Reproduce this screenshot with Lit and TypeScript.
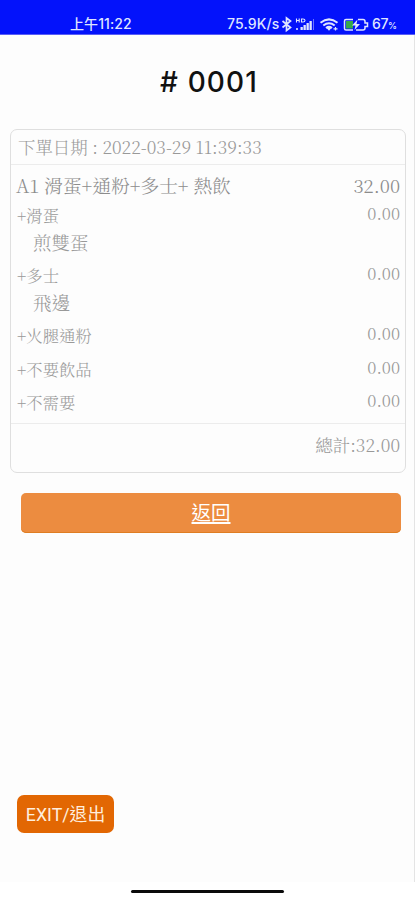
import { LitElement, html, css, svg } from "lit";
import { customElement } from "lit/decorators.js";
import { styleMap } from "lit/directives/style-map.js";

interface Option {
  name: string;
  note?: string;
  price: string;
  height: number;
}

const OPTIONS: Option[] = [
  { name: "+滑蛋", note: "煎雙蛋", price: "0.00", height: 60 },
  { name: "+多士", note: "飛邊", price: "0.00", height: 60 },
  { name: "+火腿通粉", price: "0.00", height: 34 },
  { name: "+不要飲品", price: "0.00", height: 33 },
  { name: "+不需要", price: "0.00", height: 36 },
];

@customElement("status-bar")
class StatusBar extends LitElement {
  static styles = css`
    :host {
      display: flex;
      box-sizing: border-box;
      height: 35px;
      padding: 15px 18px 0 70px;
      background: #0312fb;
      border-bottom: 1px solid #5a5ef5;
      color: #dfe5ff;
      font: 500 14px/18px Inter, "Noto Sans CJK TC", sans-serif;
      white-space: nowrap;
    }
    .time { flex: 1; font-size: 14px; letter-spacing: 0.1px; }
    .speed { width: 54px; letter-spacing: 0.15px; }
    svg { display: block; width: 91px; height: 18px; }
    .level { width: 25px; letter-spacing: -0.4px; }
    .pct { font-size: 9px; }
  `;
  render() {
    const bars = [0, 1, 2, 3].map(
      (i) => svg`<rect x=${19.5 + i * 3} y=${12 - i * 2} width="2.3" height=${3 + i * 2} fill="#dfe5ff" stroke="none" />`
    );
    return html`
      <span class="time">上午11:22</span>
      <span class="speed">75.9K/s</span>
      <svg viewBox="0 0 91 18" fill="none" stroke="#dfe5ff">
        <path d="M1.500 6 L9.500 12.500 L5.500 15.500 V3 L9.500 6 L1.500 12.500" stroke-width="1.700" />
        <path d="M15.500 3.500v4M18.200 3.500v4M15.500 5.500h2.700M20.500 4h1.500q2 0 2 1.500t-2 1.500h-1.500z" stroke-width="1.100" />
        <path d="M16 13v2" stroke-width="1.600" />
        ${bars}
        <path d="M32.500 4v11" stroke="#6a72ff" />
        <path d="M39.500 7.800q8.500-6.800 17 0M42.300 10.500q5.700-4.500 11.400 0M45 13q3-2.300 6 0" stroke-width="2" />
        <path d="M45.500 13h5l-2.500 2.800z" fill="#dfe5ff" stroke="none" />
        <path d="M52.500 13.800h4M54.500 12v3.500" stroke-width="1.200" />
        <path d="M72 4.500H65q-1.500 0-1.500 1.500v7.500q0 1.500 1.500 1.500h7M77 4.500h5q2 0 2 2v1.500h2.500v3.500h-2.500v1.500q0 2-2 2h-7" stroke-width="1.500" />
        <rect x="65" y="6" width="7" height="7.500" fill="#35a94b" stroke="none" />
        <path d="M76.500 4.500l-5.500 6h3.500l-1 4.500 5.500-6h-3.500z" fill="#dfe5ff" stroke="none" />
      </svg>
      <span class="level">67<span class="pct">%</span></span>
    `;
  }
}

@customElement("order-card")
class OrderCard extends LitElement {
  static styles = css`
    :host {
      display: block;
      box-sizing: border-box;
      height: 344px;
      margin: 0 8px 0 10px;
      border: 1.500px solid #dfdfdf;
      border-radius: 7px;
      color: #999;
      font-family: "Noto Serif CJK TC", "Liberation Serif", "Noto Sans CJK TC", serif;
      font-weight: 300;
      white-space: nowrap;
    }
    .date {
      height: 34px;
      padding-left: 7px;
      border-bottom: 1px solid #ececec;
      font-size: 17.450px;
      line-height: 34px;
    }
    .item {
      display: flex;
      justify-content: space-between;
      height: 35px;
      padding: 0 5px;
      color: #8c8c8c;
      font-size: 18.700px;
      line-height: 40px;
    }
    .option {
      display: flex;
      justify-content: space-between;
      padding: 0 5px 0 6px;
    }
    .name { font-size: 16.300px; line-height: 31px; }
    .note { padding-left: 16px; font-size: 18.500px; line-height: 22px; }
    .price { font-size: 16.800px; line-height: 26px; }
    .total {
      padding-right: 5px;
      border-top: 1px solid #ececec;
      font-size: 17.500px;
      line-height: 41px;
      text-align: right;
    }
  `;
  render() {
    return html`
      <div class="date">下單日期 : 2022-03-29 11:39:33</div>
      <div class="item"><span>A1 滑蛋+通粉+多士+ 熱飲</span><span>32.00</span></div>
      ${OPTIONS.map(
        (o) => html`
          <div class="option" style=${styleMap({ height: `${o.height}px` })}>
            <div>
              <div class="name">${o.name}</div>
              ${o.note ? html`<div class="note">${o.note}</div>` : null}
            </div>
            <span class="price">${o.price}</span>
          </div>
        `
      )}
      <div class="total">總計:32.00</div>
    `;
  }
}

@customElement("app-root")
class AppRoot extends LitElement {
  static styles = css`
    :host {
      display: flex;
      flex-direction: column;
      height: 900px;
      background: #fff;
      font-family: Inter, "Noto Sans CJK TC", sans-serif;
    }
    .page {
      box-sizing: border-box;
      display: flex;
      flex-direction: column;
      height: 847px;
      background: #fdfdfd;
      border-right: 1px solid #e4e4e4;
    }
    .title {
      margin: 0;
      height: 94px;
      padding-left: 4px;
      color: #111;
      font-size: 28px;
      font-weight: 500;
      line-height: 95px;
      letter-spacing: 1.1px;
      text-align: center;
    }
    .back {
      margin: 20px 13px 0 21px;
      height: 40px;
      border-radius: 5px;
      background: #ec8c40;
      box-shadow: inset 0 -1px #df7d22;
      color: #fff;
      font: 400 19.500px/38px "Noto Sans CJK TC", sans-serif;
      text-align: center;
      text-decoration: underline;
      text-underline-offset: 2px;
      text-decoration-thickness: 1.500px;
    }
    .exit {
      align-self: flex-start;
      margin: 262px 0 0 17px;
      width: 97px;
      height: 38px;
      border-radius: 7px;
      background: #e26703;
      color: #ffeedd;
      font: 400 17.800px/39px Roboto, "Noto Sans CJK TC", sans-serif;
      text-align: center;
    }
    .handle {
      width: 153px;
      height: 3px;
      margin: 8px 0 0 131px;
      border-radius: 2px;
      background: #0a0a0a;
    }
  `;
  render() {
    return html`
      <status-bar></status-bar>
      <main class="page">
        <h1 class="title"># 0001</h1>
        <order-card></order-card>
        <div class="back">返回</div>
        <div class="exit">EXIT/退出</div>
      </main>
      <div class="handle"></div>
    `;
  }
}
